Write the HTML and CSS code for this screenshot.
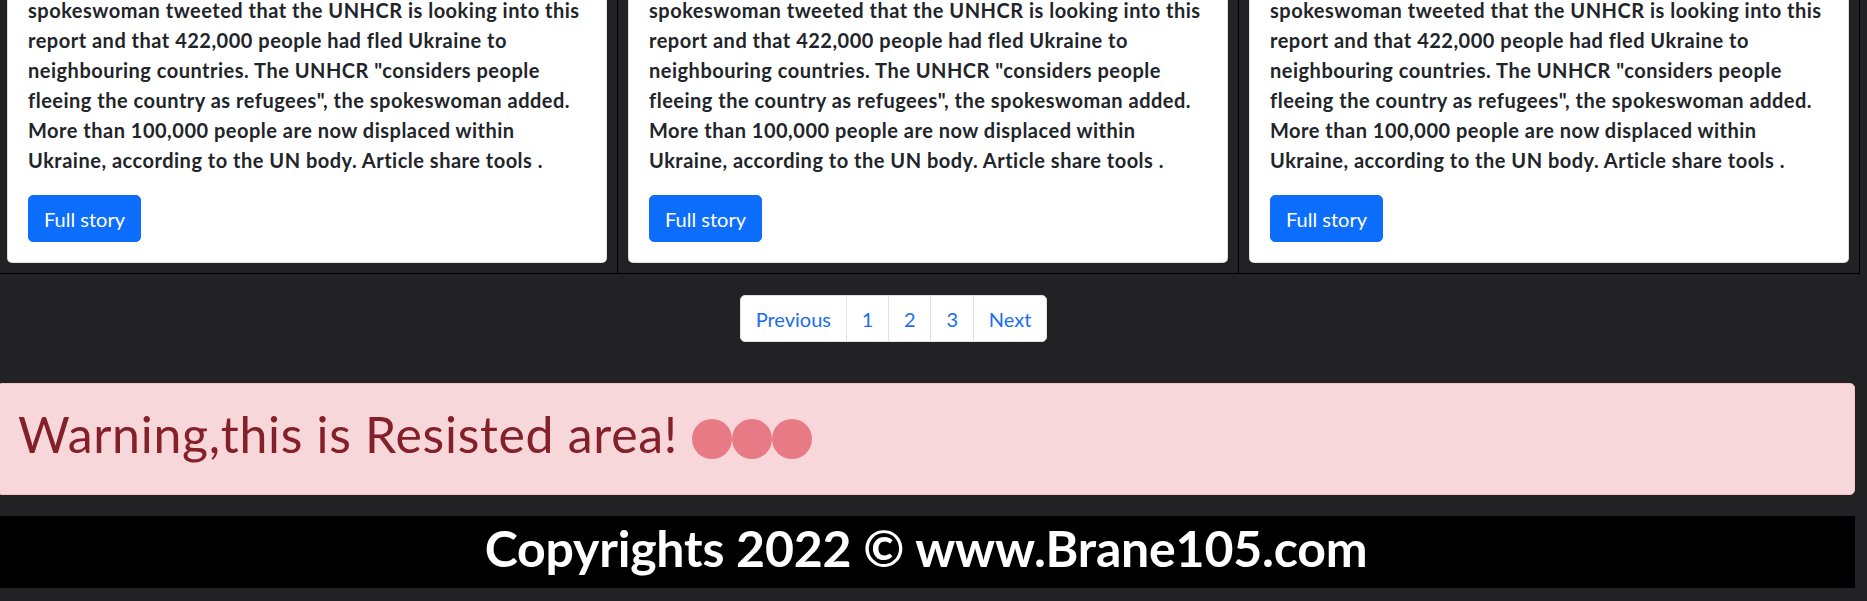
FILE: index.html
```html
<!DOCTYPE html>
<html lang="en">
<head>
<meta charset="utf-8">
<title>News</title>
<link rel="stylesheet" href="styles.css">
</head>
<body>
<main class="page">
  <section class="news-row">
    <div class="news-col">
      <article class="card">
        <div class="card-body">
          <p class="card-text">spokeswoman tweeted that the UNHCR is looking into this report and that 422,000 people had fled Ukraine to neighbouring countries. The UNHCR "considers people fleeing the country as refugees", the spokeswoman added. More than 100,000 people are now displaced within Ukraine, according to the UN body. Article share tools .</p>
          <a class="btn" href="#">Full story</a>
        </div>
      </article>
    </div>
    <div class="news-col">
      <article class="card">
        <div class="card-body">
          <p class="card-text">spokeswoman tweeted that the UNHCR is looking into this report and that 422,000 people had fled Ukraine to neighbouring countries. The UNHCR "considers people fleeing the country as refugees", the spokeswoman added. More than 100,000 people are now displaced within Ukraine, according to the UN body. Article share tools .</p>
          <a class="btn" href="#">Full story</a>
        </div>
      </article>
    </div>
    <div class="news-col">
      <article class="card">
        <div class="card-body">
          <p class="card-text">spokeswoman tweeted that the UNHCR is looking into this report and that 422,000 people had fled Ukraine to neighbouring countries. The UNHCR "considers people fleeing the country as refugees", the spokeswoman added. More than 100,000 people are now displaced within Ukraine, according to the UN body. Article share tools .</p>
          <a class="btn" href="#">Full story</a>
        </div>
      </article>
    </div>
  </section>

  <nav class="pager-wrap" aria-label="Pages">
    <ul class="pagination">
      <li class="page-item"><a class="page-link first" href="#">Previous</a></li>
      <li class="page-item"><a class="page-link" href="#">1</a></li>
      <li class="page-item"><a class="page-link" href="#">2</a></li>
      <li class="page-item"><a class="page-link" href="#">3</a></li>
      <li class="page-item"><a class="page-link last" href="#">Next</a></li>
    </ul>
  </nav>

  <div class="alert" role="alert">
    <h1 class="alert-title">Warning,this is Resisted area! <span class="dot"></span><span class="dot"></span><span class="dot"></span></h1>
  </div>

  <footer class="footer">
    <h1 class="footer-title">Copyrights 2022 © www.Brane105.com</h1>
  </footer>
</main>
</body>
</html>
```

FILE: styles.css
```css
html, body {
  margin: 0;
  padding: 0;
}

body {
  background: #222123;
  font-family: Lato, "Open Sans", "DejaVu Sans", sans-serif;
  font-size: 20px;
  line-height: 1.5;
  color: #212529;
  overflow: hidden;
}

.page {
  margin: -26px 7px 0 -3px;
}

.news-row {
  display: grid;
  grid-template-columns: repeat(3, 1fr);
}

.news-col {
  padding: 0 10px 9.5px;
  border-right: 1.25px solid #000;
  border-bottom: 1.25px solid #000;
}

.card {
  background: #fff;
  border: 1.25px solid rgba(0, 0, 0, 0.125);
  border-radius: 5px;
}

.card-body {
  padding: 20px;
}

.card-text {
  margin: 0 0 20px;
  font-weight: 700;
  letter-spacing: 0.5px;
}

.btn {
  display: inline-block;
  padding: 7.5px 15px;
  font-size: 20px;
  line-height: 1.5;
  color: #fff;
  background: #0d6efd;
  border: 1.25px solid #0d6efd;
  border-radius: 5px;
  text-decoration: none;
}

.pager-wrap {
  display: flex;
  justify-content: center;
  padding-right: 70px;
  margin: 21.5px 0 41px;
}

.pagination {
  display: flex;
  list-style: none;
  margin: 0;
  padding: 0;
}

.page-link {
  display: block;
  padding: 7.5px 15px;
  color: #1a6ef0;
  background: #fff;
  border: 1.25px solid #dee2e6;
  margin-left: -1.25px;
  text-decoration: none;
}

.page-link.first {
  margin-left: 0;
  border-radius: 5px 0 0 5px;
}

.page-link.last {
  border-radius: 0 5px 5px 0;
}

.alert {
  margin: 0 5px 20.5px 0;
  padding: 20px;
  background: #f8d7da;
  border: 1.25px solid #f5c2c7;
  border-radius: 5px;
  color: #842029;
}

.alert-title {
  margin: 0 0 10px;
  font-size: 50px;
  line-height: 1.2;
  font-weight: 400;
  letter-spacing: 0.7px;
}

.dot {
  display: inline-block;
  width: 40px;
  height: 40px;
  border-radius: 50%;
  background: #e77a84;
  vertical-align: -0.125em;
}

.footer {
  margin-right: 5px;
  background: #000;
  text-align: center;
  padding: 2.5px 0 9.5px;
}

.footer-title {
  margin: 0;
  font-size: 50px;
  line-height: 1.2;
  font-weight: 700;
  color: #fff;
  letter-spacing: -0.2px;
}
```
